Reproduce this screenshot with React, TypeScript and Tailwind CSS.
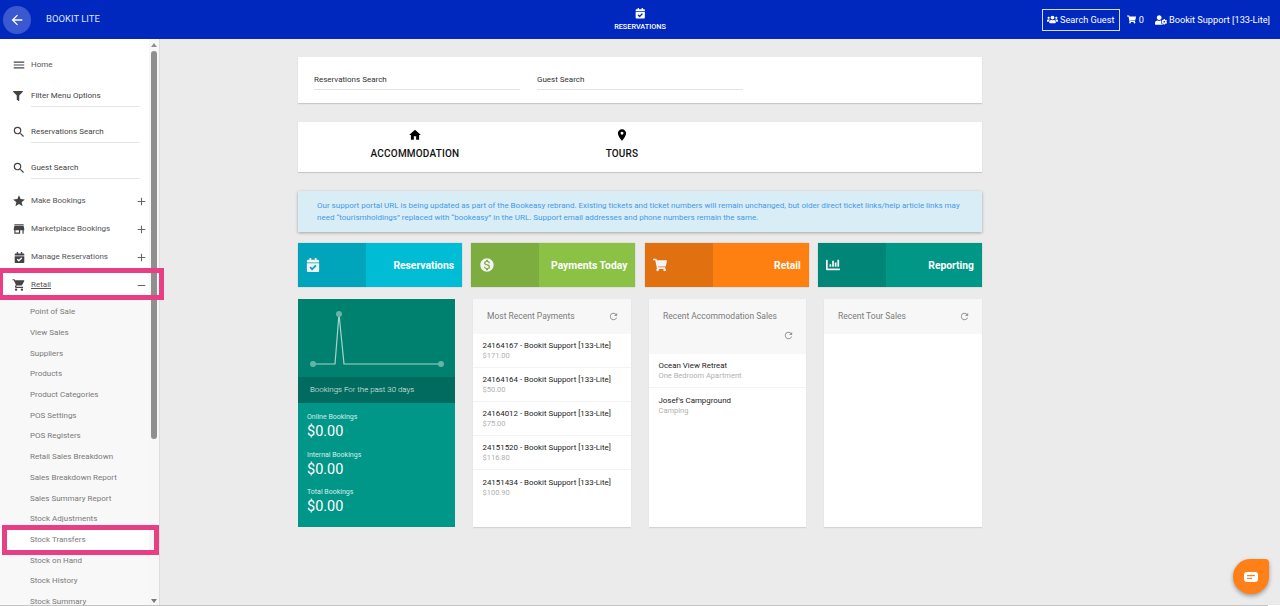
import React from "react";
import {
  MdAdd,
  MdArrowBack,
  MdHome,
  MdLocationOn,
  MdMenu,
  MdMonetizationOn,
  MdRefresh,
  MdRemove,
  MdSearch,
  MdShoppingCart,
  MdStar,
  MdStore,
} from "react-icons/md";
import { FaCalendarCheck, FaChartBar, FaFilter, FaShoppingCart, FaUserCog, FaUsers } from "react-icons/fa";

const retailLinks = [
  "Point of Sale",
  "View Sales",
  "Suppliers",
  "Products",
  "Product Categories",
  "POS Settings",
  "POS Registers",
  "Retail Sales Breakdown",
  "Sales Breakdown Report",
  "Sales Summary Report",
  "Stock Adjustments",
  "Stock Transfers",
  "Stock on Hand",
  "Stock History",
  "Stock Summary",
];

const payments = [
  { ref: "24164167", amount: "$171.00" },
  { ref: "24164164", amount: "$50.00" },
  { ref: "24164012", amount: "$75.00" },
  { ref: "24151520", amount: "$116.80" },
  { ref: "24151434", amount: "$100.90" },
];

const stats = ["Online Bookings", "Internal Bookings", "Total Bookings"];

const MenuRow = ({
  icon,
  label,
  expand,
  underline,
}: {
  icon: React.ReactNode;
  label: string;
  expand?: "plus" | "minus";
  underline?: boolean;
}) => (
  <div className="flex h-7 items-center pl-3 pr-[2px]">
    <span className="flex w-[19px] text-[14px] text-[#444444]">{icon}</span>
    <span className={`flex-1 text-[8px] text-[#555555] ${underline ? "underline" : ""}`}>{label}</span>
    {expand === "plus" && <MdAdd className="text-[13px] text-[#666666]" />}
    {expand === "minus" && <MdRemove className="text-[13px] text-[#666666]" />}
  </div>
);

const InputRow = ({ icon, label }: { icon: React.ReactNode; label: string }) => (
  <div className="flex h-9 pl-3 pr-[11px] last:h-[29px]">
    <span className="flex h-5 w-[19px] items-center text-[14px] text-[#444444]">{icon}</span>
    <div className="h-[21px] flex-1 border-b border-[#e4e4e4] text-[8px] leading-[20px] text-[#444444]">{label}</div>
  </div>
);

const Sidebar = () => (
  <aside className="relative h-[566px] w-[160px] shrink-0 border-r border-[#dddddd] bg-white">
    <div className="h-full w-[150px] overflow-hidden pt-[12px]">
      <MenuRow icon={<MdMenu />} label="Home" />
      <div className="pt-[7px]">
        <InputRow icon={<FaFilter className="ml-[1px] text-[10px]" />} label="Filter Menu Options" />
        <InputRow icon={<MdSearch />} label="Reservations Search" />
        <InputRow icon={<MdSearch />} label="Guest Search" />
      </div>
      <MenuRow icon={<MdStar />} label="Make Bookings" expand="plus" />
      <MenuRow icon={<MdStore />} label="Marketplace Bookings" expand="plus" />
      <MenuRow icon={<FaCalendarCheck className="ml-[2px] text-[11px]" />} label="Manage Reservations" expand="plus" />
      <MenuRow icon={<MdShoppingCart />} label="Retail" expand="minus" underline />
      <ul className="bg-[#f8f8f8] pt-[3px]">
        {retailLinks.map((link) => (
          <li
            key={link}
            className={`flex h-[20.7px] items-center pl-[30px] text-[8px] text-[#7a7a7a] ${
              link === "Stock Transfers" ? "bg-white" : ""
            }`}
          >
            {link}
          </li>
        ))}
      </ul>
    </div>
    {/* scrollbar */}
    <div className="absolute right-0 top-0 flex h-full w-[10px] flex-col items-center bg-[#f7f7f7] pt-1">
      <div className="h-0 w-0 border-x-[3.5px] border-b-[4px] border-x-transparent border-b-[#8f8f8f]" />
      <div className="mt-1 h-[388px] w-[6px] rounded-full bg-[#8f8f8f]" />
      <div className="flex-1" />
      <div className="mb-[2px] h-0 w-0 border-x-[3.5px] border-t-[4px] border-x-transparent border-t-[#7a7a7a]" />
    </div>
    {/* highlight boxes from the annotated screenshot */}
    <div className="absolute left-0 top-[229px] h-[32px] w-[164px] border-[5px] border-l-[3px] border-[#e83e84]" />
    <div className="absolute left-[2px] top-[486px] h-[30px] w-[157px] border-[5px] border-[#e83e84]" />
  </aside>
);

const Tile = ({
  icon,
  label,
  dark,
  light,
}: {
  icon: React.ReactNode;
  label: string;
  dark: string;
  light: string;
}) => (
  <div className={`flex h-[44px] w-[164px] shadow-[0_0_1px_rgba(0,0,0,0.3)] ${light}`}>
    <div className={`flex w-[68px] items-center pb-[1px] pl-2 text-[14px] text-[#f3f3f3] ${dark}`}>{icon}</div>
    <div className="flex flex-1 items-center justify-end pr-2 pt-[2px] text-[10.3px] font-bold text-white">{label}</div>
  </div>
);

const PanelHead = ({ title, tall }: { title: string; tall?: boolean }) => (
  <div className={`bg-[#f7f7f7] pl-[14px] pr-3 ${tall ? "h-[55px]" : "h-[35px]"}`}>
    <div className="flex flex-wrap items-center justify-between pt-[11px]">
      <span className="text-[8.5px] leading-[13px] text-[#7b7b7b]">{title}</span>
      {tall ? (
        <div className="mt-[7px] flex w-full justify-end">
          <MdRefresh className="text-[11px] text-[#999999]" />
        </div>
      ) : (
        <MdRefresh className="text-[11px] text-[#999999]" />
      )}
    </div>
  </div>
);

const ListItem = ({ title, sub }: { title: string; sub: string }) => (
  <div className="flex h-[34px] flex-col justify-center border-b border-[#f3f3f3] pl-[9.5px] last:border-b-0">
    <div className="text-[7.9px] leading-[11px] text-[#222222]">{title}</div>
    <div className="mt-[-1px] text-[7.5px] leading-[11px] text-[#b0b0b0]">{sub}</div>
  </div>
);

export default function App() {
  return (
    <div
      className="flex h-[606px] w-[1280px] flex-col overflow-hidden bg-[#ebebeb]"
      style={{ fontFamily: "Roboto, 'Liberation Sans', sans-serif" }}
    >
      <header className="relative flex h-[39px] shrink-0 items-center justify-between bg-[#0028bf] pl-[3px] pr-[10px] text-white">
        <div className="flex items-center">
          <div className="flex h-7 w-7 items-center justify-center rounded-full bg-[#3a59d0]">
            <MdArrowBack className="text-[16px]" />
          </div>
          <span className="ml-[15px] text-[9.5px] text-[#dfe5fb]">BOOKIT LITE</span>
        </div>
        <div className="absolute left-[610px] top-[8px] flex w-[60px] flex-col items-center">
          <FaCalendarCheck className="text-[10.5px]" />
          <span className="mt-[3px] text-[7.3px] font-medium leading-[9px]">RESERVATIONS</span>
        </div>
        <div className="flex items-center text-[9.2px]">
          <div className="flex h-[22px] w-[78px] items-center justify-center gap-[2px] border border-[#d5dcf7]">
            <FaUsers className="text-[11px]" />
            <span>Search Guest</span>
          </div>
          <FaShoppingCart className="ml-[7px] text-[9px]" />
          <span className="ml-[3px]">0</span>
          <FaUserCog className="ml-[11px] text-[12px]" />
          <span className="ml-[2px]">Bookit Support [133-Lite]</span>
        </div>
      </header>

      <div className="flex flex-1">
        <Sidebar />
        <main className="relative flex-1 pl-[138px] pt-[18px]">
          <div className="flex w-[684px] flex-col">
            <section className="flex h-[46px] gap-[17px] bg-white px-4 pt-[14px] shadow-[0_1px_1px_rgba(0,0,0,0.15)]">
              <div className="h-[19px] w-[206px] border-b border-[#e4e4e4] text-[8px] leading-[18px] text-[#333333]">
                Reservations Search
              </div>
              <div className="h-[19px] w-[206px] border-b border-[#e4e4e4] text-[8px] leading-[18px] text-[#333333]">
                Guest Search
              </div>
            </section>

            <section className="mt-[19px] flex h-[50px] bg-white shadow-[0_1px_1px_rgba(0,0,0,0.15)]">
              <div className="flex w-[234px] flex-col items-center pt-[6px]">
                <MdHome className="text-[14px] text-black" />
                <span className="mt-[4px] text-[10px] font-medium tracking-[0.2px] text-[#111111]">ACCOMMODATION</span>
              </div>
              <div className="flex w-[180px] flex-col items-center pt-[6px]">
                <MdLocationOn className="text-[14px] text-black" />
                <span className="mt-[4px] text-[10px] font-medium tracking-[0.2px] text-[#111111]">TOURS</span>
              </div>
            </section>

            <section className="mt-[19px] h-[41px] bg-[#d9edf7] px-[19px] pt-[9px] text-[8px] leading-[11.5px] text-[#3d9be9] shadow-[0_1px_3px_rgba(0,0,0,0.3)]">
              Our support portal URL is being updated as part of the Bookeasy rebrand. Existing tickets and ticket numbers will remain unchanged, but older direct ticket links/help article links may need “tourismholdings” replaced with “bookeasy” in the URL. Support email addresses and phone numbers remain the same.
            </section>

            <section className="mt-[11px] flex justify-between">
              <Tile icon={<FaCalendarCheck />} label="Reservations" dark="bg-[#00a5bb]" light="bg-[#00bcd4]" />
              <Tile icon={<MdMonetizationOn className="text-[16px]" />} label="Payments Today" dark="bg-[#7cad3e]" light="bg-[#8bc145]" />
              <Tile icon={<FaShoppingCart />} label="Retail" dark="bg-[#e07010]" light="bg-[#fe8011]" />
              <Tile icon={<FaChartBar />} label="Reporting" dark="bg-[#008576]" light="bg-[#009786]" />
            </section>

            <section className="mt-[12px] flex h-[228px] justify-between">
              <div className="flex w-[157px] flex-col bg-[#009688] text-white">
                <div className="h-[78px] bg-[#00806f]">
                  <svg viewBox="0 0 157 78" className="h-[78px] w-[157px]">
                    <polyline points="15,65 37,65 41,15 46,65 143,65" fill="none" stroke="#a8d3cc" strokeWidth="1.2" />
                    <circle cx="15" cy="65" r="3" fill="#66b3a8" />
                    <circle cx="41" cy="15" r="3" fill="#66b3a8" />
                    <circle cx="143" cy="65" r="3" fill="#66b3a8" />
                  </svg>
                </div>
                <div className="flex h-[26px] items-center bg-[#006b5e] pl-3 text-[7.9px] font-light text-[#e2f1ef]">
                  Bookings For the past 30 days
                </div>
                <div className="flex flex-col gap-[9.5px] pl-[9px] pt-[10px]">
                  {stats.map((stat) => (
                    <div key={stat}>
                      <div className="text-[7px] leading-[9px] text-[#d7eeeb]">{stat}</div>
                      <div className="text-[14.5px] leading-[19px]">$0.00</div>
                    </div>
                  ))}
                </div>
              </div>

              <div className="w-[158px] bg-white shadow-[0_1px_1px_rgba(0,0,0,0.1)]">
                <PanelHead title="Most Recent Payments" />
                {payments.map((p) => (
                  <ListItem key={p.ref} title={`${p.ref} - Bookit Support [133-Lite]`} sub={p.amount} />
                ))}
              </div>

              <div className="w-[157px] bg-white shadow-[0_1px_1px_rgba(0,0,0,0.1)]">
                <PanelHead title="Recent Accommodation Sales" tall />
                <ListItem title="Ocean View Retreat" sub="One Bedroom Apartment" />
                <ListItem title="Josef's Campground" sub="Camping" />
              </div>

              <div className="w-[158px] bg-white shadow-[0_1px_1px_rgba(0,0,0,0.1)]">
                <PanelHead title="Recent Tour Sales" />
              </div>
            </section>
          </div>

          {/* chat launcher */}
          <div className="absolute bottom-[11px] right-[11px] flex h-[35px] w-[36px] items-center justify-center rounded-[18px] rounded-tr-[4px] bg-[#ff8019] shadow-[0_2px_4px_rgba(0,0,0,0.35)]">
            <svg viewBox="0 0 14 10" className="h-[10px] w-[14px]">
              <rect width="14" height="10" rx="3" fill="#ffffff" />
              <rect x="3" y="3" width="8" height="1.2" fill="#ff8019" />
              <rect x="3" y="5.8" width="5" height="1.2" fill="#ff8019" />
            </svg>
          </div>
        </main>
      </div>
      <div className="flex h-px shrink-0">
        <div className="w-[1268px] bg-[#c4c4c4]" />
        <div className="flex-1 bg-white" />
      </div>
    </div>
  );
}
